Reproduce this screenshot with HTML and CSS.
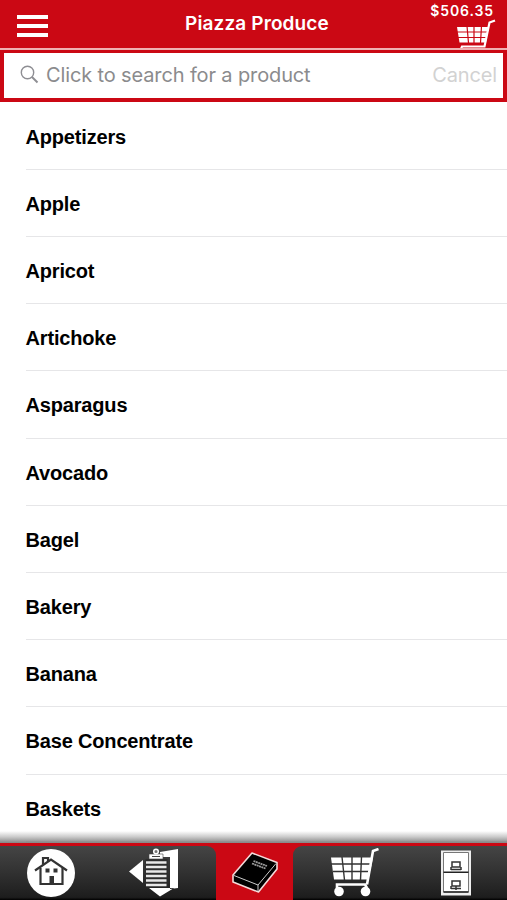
FILE: index.html
```
<!DOCTYPE html>
<html lang="en">
<head>
  <meta charset="UTF-8" />
  <title>Piazza Produce</title>
  <meta name="viewport" content="width=device-width, initial-scale=1.0" />
  <link rel="stylesheet" href="styles.css">
</head>

<body>
  <div class="app">
    <header class="header">
      <div class="menu">
        <span></span>
        <span></span>
        <span></span>
      </div>
      <h1>Piazza Produce</h1>
      <div class="total">
        <span class="amount">$506.35</span>
        <svg class="cart" width="40" height="30" viewBox="0 0 40 30">
          <path d="M1 8H32.500L30 23.500H3.500Z" fill="#fff" />
          <path d="M0 13H33M1 18.500H32M11 7L12.500 24M18 7V24M25.500 7L24.500 24" stroke="#cb0814" stroke-width="1.200" />
          <path d="M39 1.500L33.500 3.500L28.500 27.500H6L5 30" fill="none" stroke="#fff" stroke-width="2.200" />
        </svg>
      </div>
    </header>

    <div class="search">
      <svg width="20" height="20" viewBox="0 0 20 20" fill="none" stroke="#8e8e93">
        <circle cx="7.500" cy="7.500" r="6.200" stroke-width="1.400" />
        <path d="M12 12L17.500 17.500" stroke-width="1.900" />
      </svg>
      <span class="placeholder">Click to search for a product</span>
      <span class="cancel">Cancel</span>
    </div>

    <ul class="list">
      <li>Appetizers</li>
      <li>Apple</li>
      <li>Apricot</li>
      <li>Artichoke</li>
      <li>Asparagus</li>
      <li>Avocado</li>
      <li>Bagel</li>
      <li>Bakery</li>
      <li>Banana</li>
      <li>Base Concentrate</li>
      <li>Baskets</li>
    </ul>

    <nav class="tabs">
      <div class="group left">
        <!-- home -->
        <svg width="50" height="50" viewBox="0 0 50 50">
          <circle cx="25" cy="25" r="24" fill="#fff" />
          <g fill="none" stroke="#333" stroke-width="2.200">
            <path d="M9 22.500L25 11.500L41 22.500" />
            <path d="M14.500 20V36H36.500V20" />
            <path d="M17 16.500V10H22V13" />
          </g>
          <path d="M19.500 20.500h4v4h-4zM27.500 20.500h4v4h-4zM23.500 28h4.500v8h-4.500z" fill="#333" />
        </svg>
        <!-- order guide -->
        <svg width="50" height="50" viewBox="0 0 50 50">
          <path d="M14 12V35L0 23.500Z" fill="#fff" />
          <path d="M31 4L49 1V40L41 41V9H31ZM20 40L31 48.500L45 40Z" fill="#fff" />
          <path d="M16.500 11H38.500V38.500H16.500Z" fill="#2d2d2d" />
          <path d="M17 14.500H37.500M17 19H37.500M17 23.500H37.500M17 28H37.500M17 32.500H37.500M17 37H37.500" stroke="#e8e8e8" stroke-width="2.300" />
          <path d="M20 6H34V11H20Z" fill="#fff" stroke="#444" stroke-width=".6" />
          <circle cx="27" cy="3.500" r="2.300" fill="#777" stroke="#fff" stroke-width="1.500" />
          <path d="M23 8.500H31" stroke="#444" stroke-width="1" />
        </svg>
      </div>
      <div class="active">
        <!-- catalog -->
        <svg width="48" height="44" viewBox="0 0 48 44">
          <path d="M21 2L46 11.500V18L27.500 41L2 31V24Z" fill="#000" stroke="#f4d9d9" stroke-width="1.600" stroke-linejoin="round" />
          <path d="M3 24.500L27 34L45 12.500" fill="none" stroke="#ccc" stroke-width="1" />
          <path d="M27 34V40" stroke="#ccc" stroke-width="1" />
          <path d="M22.500 10L36 15M21 12.500L34.500 17.500" stroke="#999" stroke-width="1.800" stroke-dasharray="2 .5" />
        </svg>
      </div>
      <div class="group right">
        <!-- cart -->
        <svg width="50" height="50" viewBox="0 0 50 50">
          <path d="M1 9.500H43L38.500 31.500H4Z" fill="#fff" />
          <path d="M1 16H43M3 23.500H41M12 9L14.500 32M22 9V32M31.500 9L30.500 32" stroke="#333" stroke-width="1.400" />
          <path d="M48.500 1L43 3L37 36.500M7 40V36.500H35L37 40" fill="none" stroke="#fff" stroke-width="2.600" />
          <circle cx="9" cy="43.500" r="4.800" fill="#fff" />
          <circle cx="35.500" cy="43.500" r="4.800" fill="#fff" />
        </svg>
        <!-- cabinet -->
        <svg width="32" height="46" viewBox="0 0 32 46">
          <path d="M1 .5H31V45.500H1Z" fill="#eee" />
          <path d="M3.500 2.500H28.500V42H3.500Z" fill="#fff" stroke="#777" stroke-width="1" />
          <path d="M3.500 22.300H28.500M3.500 42H28.500" stroke="#222" stroke-width="1.400" />
          <g fill="none" stroke="#333" stroke-width="1.500">
            <path d="M12 12H20V17H12ZM11 19.500H21M11 17V20M21 17V20" />
            <path d="M12 31H20V36H12ZM11 38.500H21M16 36V40M11 36V39" />
          </g>
        </svg>
      </div>
    </nav>
  </div>
</body>
</html>
```

FILE: styles.css
```
* {
  box-sizing: border-box;
}

body {
  margin: 0;
  font-family: Inter, sans-serif;
  background: white;
  overflow: hidden;
}

.app {
  display: flex;
  flex-direction: column;
  height: 900px;
}

.header {
  display: grid;
  grid-template-columns: 120px 1fr 120px;
  height: 50px;
  background: #cb0814;
  border-bottom: 2px solid #efb0b2;
  color: white;
  overflow: hidden;
}

.menu {
  display: flex;
  flex-direction: column;
  gap: 5px;
  padding: 15px 0 0 17px;
}

.menu span {
  width: 31px;
  height: 4px;
  background: white;
}

.header h1 {
  margin: 0;
  padding-left: 7px;
  font-size: 19px;
  font-weight: 600;
  line-height: 48px;
  letter-spacing: 0.12px;
  text-align: center;
}

.total {
  display: flex;
  flex-direction: column;
  align-items: flex-end;
  padding: 3px 11px 0 0;
}

.amount {
  padding-right: 2px;
  font-size: 14px;
  font-weight: 600;
  line-height: 16px;
  letter-spacing: 0.9px;
}

.cart {
  flex: none;
}

.search {
  display: flex;
  align-items: center;
  flex: none;
  height: 52px;
  padding: 0 6px 1px 16px;
  border: 4px solid #cb0814;
  border-top-width: 3px;
  background: white;
  font-size: 20px;
  white-space: nowrap;
}

.placeholder {
  flex: 1;
  margin-left: 6px;
  color: #8b8b8d;
  letter-spacing: -0.13px;
}

.cancel {
  color: #d2d2d2;
  letter-spacing: -0.15px;
}

.list {
  flex: 1;
  min-height: 0;
  margin: 0;
  padding: 0.7px 0 0 25.5px;
  overflow: hidden;
  list-style: none;
  font-family: "Liberation Sans", sans-serif;
  font-size: 20px;
  font-weight: bold;
  letter-spacing: -0.17px;
}

.list li {
  height: 67.2px;
  border-bottom: 1px solid #e6e6e8;
  line-height: 68px;
}

.tabs {
  position: relative;
  display: flex;
  flex: none;
  height: 57px;
  padding-top: 3px;
  background: #cb0814;
}

/* shadow over the end of the list */
.tabs::before {
  content: "";
  position: absolute;
  top: -12px;
  left: 0;
  width: 100%;
  height: 12px;
  background: linear-gradient(rgba(100, 100, 100, 0), rgba(100, 100, 100, 0.35) 50%, #858585);
}

.group {
  display: flex;
  align-items: center;
  background: linear-gradient(#454545, #333 45%, #1d1d1d 95%, #000);
}

.left {
  width: 216px;
  padding-left: 26px;
  gap: 53px;
  border-top-right-radius: 9px;
}

.active {
  display: flex;
  align-items: center;
  justify-content: center;
  width: 77px;
}

.right {
  flex: 1;
  padding-left: 37px;
  gap: 60px;
  border-top-left-radius: 9px;
}
```
